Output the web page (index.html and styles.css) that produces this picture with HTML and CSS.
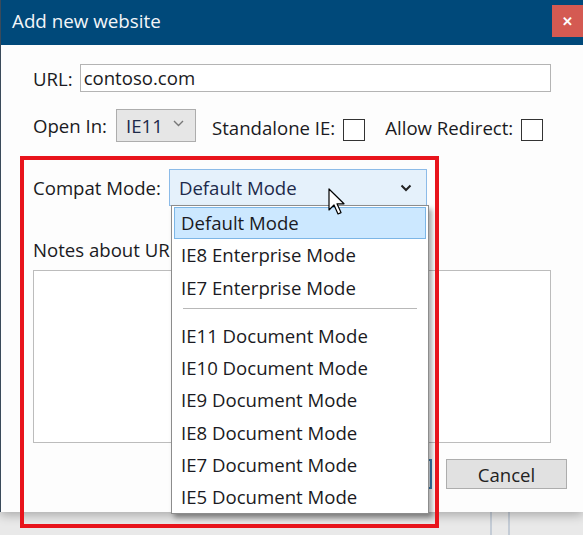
FILE: index.html
```html
<!DOCTYPE html>
<html>
<head>
<meta charset="utf-8">
<link rel="stylesheet" href="styles.css">
</head>
<body>
<div class="desk">
  <div class="dialog">
    <div class="titlebar">
      <span class="title">Add new website</span>
      <span class="close">&#x2715;</span>
    </div>
    <div class="content">
      <div class="row row-url">
        <span class="label">URL:</span>
        <div class="input">contoso.com</div>
      </div>
      <div class="row row-open">
        <span class="label">Open In:</span>
        <div class="select small">IE11 <svg class="chev" width="11" height="7" viewBox="0 0 11 7"><path d="M1 1l4.5 4.5L10 1" fill="none" stroke="#777" stroke-width="1.4"/></svg></div>
        <span class="label standalone">Standalone IE:</span>
        <span class="check"></span>
        <span class="label redirect">Allow Redirect:</span>
        <span class="check"></span>
      </div>
      <div class="row row-compat">
        <span class="label">Compat Mode:</span>
        <div class="select compat">Default Mode <svg class="chev" width="12" height="8" viewBox="0 0 12 8"><path d="M1.5 1.5l4.5 4.5 4.5-4.5" fill="none" stroke="#222" stroke-width="2"/></svg></div>
      </div>
      <div class="label notes-label">Notes about URL:</div>
      <div class="textarea"></div>
      <div class="buttons">
        <div class="btn ok">OK</div>
        <div class="btn">Cancel</div>
      </div>
    </div>
  </div>
  <div class="backdrop">
    <span class="vline"></span><span class="vline"></span>
  </div>

  <ul class="dropdown">
    <li class="item selected">Default Mode</li>
    <li class="item">IE8 Enterprise Mode</li>
    <li class="item">IE7 Enterprise Mode</li>
    <li class="sep"></li>
    <li class="item">IE11 Document Mode</li>
    <li class="item">IE10 Document Mode</li>
    <li class="item">IE9 Document Mode</li>
    <li class="item">IE8 Document Mode</li>
    <li class="item">IE7 Document Mode</li>
    <li class="item">IE5 Document Mode</li>
  </ul>

  <svg class="cursor" width="18" height="28" viewBox="0 0 18 28"><path d="M1 1v21l5-5 4 9 3-1.4-4-8.8h7z" fill="#fff" stroke="#000" stroke-width="1.2" stroke-linejoin="round"/></svg>

  <div class="highlight"></div>
</div>
</body>
</html>
```

FILE: styles.css
```css
* { box-sizing: border-box; }
html, body { margin: 0; padding: 0; }
body {
  width: 583px;
  height: 535px;
  overflow: hidden;
  background: #e9e9e9;
  font-family: "Open Sans", "Noto Sans", sans-serif;
  font-size: 18.6px;
  color: #1a1a22;
}
.desk { position: relative; width: 583px; height: 535px; }

.dialog {
  height: 512px;
  background: #fdfdfd;
  border-left: 1px solid #3a4a5a;
  box-shadow: 0 3px 10px rgba(0,0,0,0.28);
  position: relative;
  z-index: 1;
}
.titlebar {
  height: 45px;
  background: #00497a;
  display: flex;
  align-items: center;
  justify-content: space-between;
  padding-left: 11px;
  color: #f3f6f9;
  font-size: 18.8px;
}
.title { margin-top: -3px; }
.close {
  width: 31px;
  height: 32px;
  background: #d45a52;
  color: #fff;
  font-size: 13px;
  font-weight: bold;
  display: flex;
  align-items: center;
  justify-content: center;
  margin-top: -4px;
}

.content {
  padding: 19px 32px 0 32px;
  display: flex;
  flex-direction: column;
}
.row { display: flex; align-items: center; }
.label { white-space: nowrap; }

.row-url { height: 28px; }
.input {
  margin-left: 7px;
  flex: 1;
  height: 28px;
  border: 1px solid #b4b4b4;
  background: #fff;
  padding-left: 3px;
  line-height: 25px;
}

.row-open { margin-top: 17px; height: 33px; }
.select {
  display: flex;
  align-items: center;
  justify-content: space-between;
}
.small {
  margin-left: 9px;
  width: 80px;
  height: 33px;
  border: 1px solid #adadad;
  background: #e6e6e6;
  padding: 0 11px 0 9px;
  color: #1d2a4a;
}
.small .chev { margin-top: -4px; }
.standalone { margin-left: 16px; }
.check {
  width: 22px;
  height: 22px;
  border: 1px solid #333;
  background: #fff;
  margin-left: 8px;
  margin-top: 9px;
}
.label.standalone, .label.redirect { margin-top: 4px; }
.redirect { margin-left: 20px; }

.row-compat { margin-top: 27px; height: 37px; }
.compat {
  margin-left: 8px;
  width: 258px;
  height: 37px;
  border: 1px solid #8cbbe8;
  background: #e5f1fb;
  padding: 0 14px 0 9px;
  color: #1d2a4a;
}

.notes-label { margin-top: 32px; height: 24px; line-height: 24px; }
.textarea {
  margin-top: 8px;
  height: 173px;
  border: 1px solid #bcbcbc;
  background: #fff;
}
.buttons {
  margin-top: 16px;
  display: flex;
  justify-content: flex-end;
  gap: 14px;
  margin-right: -16px;
}
.btn {
  width: 121px;
  height: 30px;
  border: 1px solid #adadad;
  background: #e1e1e1;
  display: flex;
  align-items: center;
  justify-content: center;
  color: #222;
}
.btn.ok { border: 2px solid #3c7fb1; background: #e5f1fb; }

.backdrop {
  height: 23px;
  display: flex;
  padding-left: 490px;
  gap: 16px;
}
.vline {
  width: 2px;
  height: 23px;
  background: #c4ccd6;
}

.dropdown {
  position: absolute;
  left: 171px;
  top: 205px;
  width: 258px;
  height: 309px;
  margin: 0;
  padding: 1px 2px;
  list-style: none;
  background: #fff;
  border: 1px solid #8c8c8c;
  box-shadow: 3px 4px 5px rgba(0,0,0,0.35);
  z-index: 2;
}
.item {
  height: 32.3px;
  line-height: 30px;
  padding-left: 6px;
  border: 1px solid transparent;
  white-space: nowrap;
}
.item.selected {
  background: #cce8ff;
  border-color: #7cb6e6;
}
.sep {
  height: 1px;
  background: #b8b8b8;
  margin: 4px 9px 11px 9px;
}

.cursor {
  position: absolute;
  left: 328px;
  top: 188px;
  z-index: 3;
}

.highlight {
  position: absolute;
  left: 20px;
  top: 156px;
  width: 419px;
  height: 372px;
  border: 4px solid #e8141c;
  z-index: 4;
}
```
